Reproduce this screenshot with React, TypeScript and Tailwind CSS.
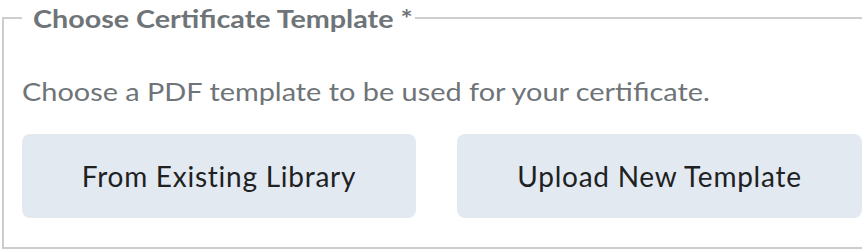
import React from "react";

export default function App() {
  return (
    <div className="w-[862px] h-[250px] overflow-hidden bg-white" style={{ fontFamily: "Lato, 'Noto Sans', sans-serif" }}>
      <fieldset className="ml-[2px] mt-[3px] w-[900px] border-2 border-[#cdcdcd] pl-[18px] pr-[18px] pb-[29px] pt-0">
        <legend className="w-[393px] pl-[11px] text-[25px] leading-[1.2] font-bold text-[#6e7477]">
          <span className="inline-block origin-left scale-x-[1.148] whitespace-nowrap">Choose Certificate Template *</span>
        </legend>
        <p className="mt-[43px] origin-left scale-x-[1.155] whitespace-nowrap text-[25px] leading-[1.2] text-[#6e7477]">
          Choose a PDF template to be used for your certificate.
        </p>
        <div className="mt-[28px] flex gap-[41px]">
          <button className="flex h-[84px] w-[394px] items-center justify-center rounded-[8px] bg-[#e3e9f1] text-[28px] tracking-[0.75px] text-[#202122]">
            From Existing Library
          </button>
          <button className="flex h-[84px] w-[405px] items-center justify-center rounded-[8px] bg-[#e3e9f1] text-[28px] tracking-[0.75px] text-[#202122]">
            Upload New Template
          </button>
        </div>
      </fieldset>
    </div>
  );
}
